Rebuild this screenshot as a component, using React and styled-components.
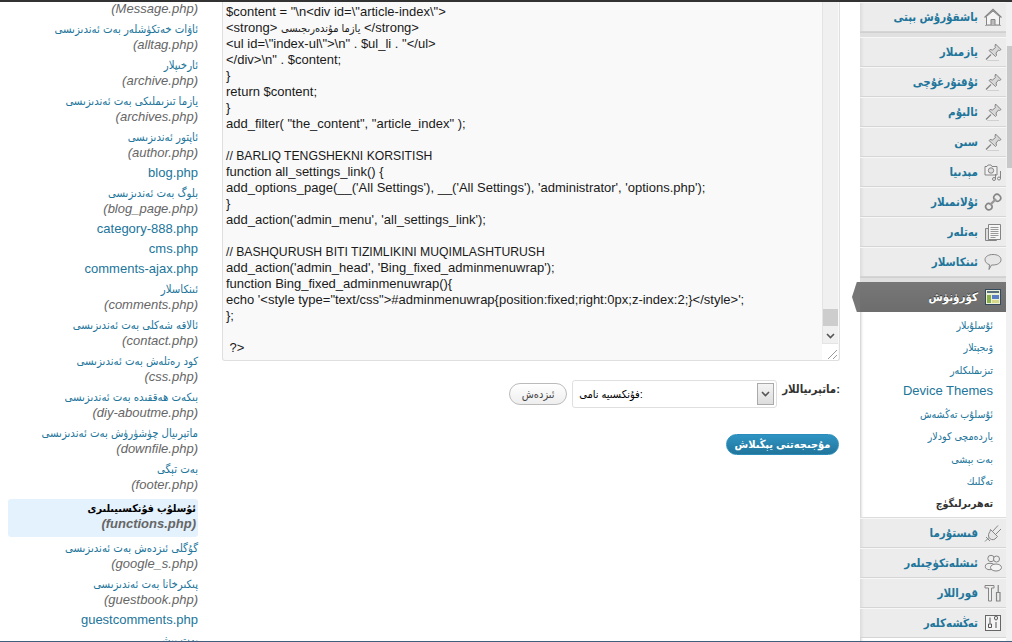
import React from 'react';
import styled, { createGlobalStyle } from 'styled-components';

const uiFont = '"Liberation Sans", "DejaVu Sans Condensed", "DejaVu Sans", sans-serif';

const Global = createGlobalStyle`
  html, body {
    margin: 0;
    padding: 0;
    height: 100%;
    overflow: hidden;
    background: #fff;
  }
  body {
    font-family: ${uiFont};
    font-size: 13px;
  }
`;

const Page = styled.div`
  width: 1012px;
  height: 642px;
  box-sizing: border-box;
  border-top: 2px solid #333;
  border-bottom: 1px solid #3f5f7c;
  display: flex;
  overflow: hidden;
`;

const FileList = styled.ul`
  width: 210px;
  flex: none;
  list-style: none;
  margin: 0;
  padding: 0 12px 0 8px;
  box-sizing: border-box;
  text-align: right;
  overflow: hidden;
`;

const FileItem = styled.li`
  margin-bottom: 4px;
  line-height: 16px;
  color: #21759b;
  ${p => p.$current && `
    background: #e4f2fd;
    border-radius: 3px;
    color: #000;
    font-weight: bold;
    margin: 6px 0 3px;
    padding: 1px 2px 5px 0;
  `}
`;

const FirstItem = styled.li`
  height: 16px;
  margin-top: -1px;
  margin-bottom: 4px;
`;

const Name = styled.div`
  font-size: ${p => (p.$latin ? '13px' : p.$bold ? '10.8px' : '11.3px')};
  white-space: nowrap;
`;

const FileName = styled.div`
  font-style: italic;
  color: #666;
  font-size: 13px;
`;

const Main = styled.main`
  width: 650px;
  flex: none;
  padding: 0 20px 0 12px;
  box-sizing: border-box;
`;

const Editor = styled.div`
  height: 359px;
  display: flex;
  background: #f9f9f9;
  border: 1px solid #dfdfdf;
  border-top: 0;
  border-radius: 0 0 3px 3px;
  box-sizing: border-box;
`;

const Code = styled.pre`
  flex: 1;
  min-width: 0;
  margin: 0;
  padding: 2px 3px;
  font-family: ${uiFont};
  font-size: 13px;
  line-height: 16px;
  color: #1a1a1a;
  overflow: hidden;
  direction: ltr;
`;

const CodeArabic = styled.span`
  font-size: 11px;
`;

const CodeCaps = styled.span`
  font-size: 12.2px;
`;

const Rail = styled.div`
  width: 15px;
  flex: none;
  margin-right: 1px;
  background: #f0f0f0;
  border-left: 1px solid #e4e4e4;
  display: flex;
  flex-direction: column;
  justify-content: flex-end;
`;

const Thumb = styled.div`
  height: 17px;
  background: #cdcdcd;
  margin-bottom: 2px;
`;

const RailArrow = styled.div`
  height: 15px;
  display: flex;
  align-items: center;
  justify-content: center;
`;

const Corner = styled.div`
  height: 17px;
  margin-left: -1px;
  background: #fff;
  border-top: 1px solid #e4e4e4;
  display: flex;
  align-items: flex-end;
  justify-content: flex-end;
  box-sizing: border-box;
`;

const Controls = styled.div`
  display: flex;
  justify-content: flex-end;
  gap: 5px;
  margin-top: 19px;
  align-items: flex-start;
`;

const SearchButton = styled.button`
  width: 58px;
  height: 22px;
  margin: 3px 0 0;
  padding: 0;
  border: 1px solid #bbb;
  border-radius: 11px;
  background: linear-gradient(#fff, #eee);
  color: #464646;
  font: 11px ${uiFont};
`;

const Select = styled.div`
  width: 205px;
  height: 28px;
  box-sizing: border-box;
  border: 1px solid #dfdfdf;
  border-radius: 3px;
  background: #fff;
  display: flex;
  align-items: center;
  justify-content: space-between;
  padding: 0 2px 0 6px;
  color: #000;
  font-size: 11px;
`;

const SelectArrow = styled.span`
  width: 17px;
  height: 22px;
  box-sizing: border-box;
  border: 1px solid #aaa;
  background: linear-gradient(#f4f4f4, #ddd);
  display: flex;
  align-items: center;
  justify-content: center;
`;

const FieldLabel = styled.label`
  font-weight: bold;
  color: #333;
  font-size: 11.4px;
  padding-top: 2px;
  white-space: nowrap;
`;

const PublishRow = styled.div`
  display: flex;
  justify-content: flex-end;
  margin-top: 26px;
  padding-right: 1px;
`;

const PublishButton = styled.button`
  width: 113px;
  height: 21px;
  padding: 0;
  border: 1px solid #298cba;
  border-radius: 11px;
  background: linear-gradient(#2f94c3, #21759b);
  color: #fff;
  white-space: nowrap;
  font: bold 11px ${uiFont};
`;

const Menu = styled.nav`
  width: 146px;
  flex: none;
  background: #fff;
  box-shadow: inset 3px 0 3px -2px #c4c4c4;
`;

const MenuRow = styled.a`
  height: 30px;
  box-sizing: border-box;
  display: flex;
  align-items: center;
  justify-content: flex-end;
  gap: 6px;
  padding-right: 4px;
  background: linear-gradient(90deg, #dcdcdc, #ececec 4px);
  border-top: 1px solid #f7f7f7;
  border-bottom: 1px solid #d5d5d5;
  color: #21759b;
  font-weight: bold;
  font-size: 11.5px;
`;

const ActiveRow = styled(MenuRow)`
  position: relative;
  background: linear-gradient(#777, #6d6d6d);
  border: 0;
  color: #fff;
  text-shadow: 0 -1px 0 #333;

  &::before {
    content: '';
    position: absolute;
    left: -8px;
    top: 0;
    width: 8px;
    height: 30px;
    background: #777;
    clip-path: polygon(100% 0, 100% 100%, 60% 100%, 0 50%, 60% 0);
  }
`;

const Separator = styled.div`
  height: 5px;
  background: #e0e0e0;
  border-top: 1px solid #d0d0d0;
  box-sizing: border-box;
`;

const SubMenu = styled.ul`
  list-style: none;
  margin: 0;
  padding: 2px 13px 5px 0;
  text-align: right;
  height: 206px;
  box-sizing: border-box;
  border-bottom: 1px solid #ddd;
`;

const SubItem = styled.li`
  height: 22.3px;
  line-height: ${p => (p.$latin ? '20px' : '22px')};
  color: ${p => (p.$current ? '#333' : '#21759b')};
  font-weight: ${p => (p.$current ? 'bold' : 'normal')};
  font-size: ${p => (p.$latin ? '13px' : '10.6px')};
`;

const Scrollbar = styled.div`
  flex: 1;
  background: #f1f1f1;
  padding-top: 44px;
`;

const ScrollThumb = styled.div`
  height: 122px;
  margin-left: 1px;
  background: #c8c8c8;
`;

const IconBox = styled.svg`
  width: 18px;
  height: 18px;
  flex: none;
  fill: none;
  stroke: #858585;
  stroke-width: 1;
`;

const Icon = ({ children }) => <IconBox viewBox="0 0 18 18">{children}</IconBox>;

const HomeIcon = () => (
  <Icon>
    <path d="M.5 9.500 9 1.500l8.500 8" strokeWidth="1.300" />
    <path d="M2.500 8.500V17h13V8.500L9 3z" fill="#f4f4f4" />
    <path d="M7 17v-5.500h4V17" fill="#bbb" />
    <path d="M1 17.500h16" stroke="#aaa" />
  </Icon>
);
const PinIcon = () => (
  <Icon>
    <path d="M11.500 1 17 6.500l-1.500 1-1-.5-2.500 3 .5 2.500-1 1L5 7.500l1-1 2.500.5 3-2.500-.5-1z" fill="#d8d8d8" />
    <path d="M7 11.500 2 16.500" strokeWidth="1.200" />
    <path d="M3 17.500h12" stroke="#d0d0d0" />
  </Icon>
);
const MediaIcon = () => (
  <Icon>
    <path d="M1 3.500h2l1-1.500h3l1 1.500h5v8.500H1z" fill="#f2f2f2" />
    <circle cx="7" cy="7.500" r="2.700" fill="#ddd" />
    <path d="M16.500 8v7.500M11.500 11v5" />
    <circle cx="15" cy="15.500" r="1.500" />
    <circle cx="10" cy="16" r="1.500" />
  </Icon>
);
const LinkIcon = () => (
  <Icon>
    <path d="M2.500 11.500a2.800 2.800 0 0 1 4-.5l1 1a2.800 2.800 0 0 1-.5 4l-.5.300a2.800 2.800 0 0 1-4-.5l-.5-.8a2.800 2.800 0 0 1 .5-3.500z" strokeWidth="1.700" />
    <path d="M11 2a2.800 2.800 0 0 1 4 0l1 1a2.800 2.800 0 0 1 0 4l-.5.500a2.800 2.800 0 0 1-4 0l-1-1a2.800 2.800 0 0 1 0-4z" strokeWidth="1.700" />
    <path d="M6 12l6-6" strokeWidth="2.400" stroke="#999" />
  </Icon>
);
const PagesIcon = () => (
  <Icon>
    <path d="M1.500 5.500h3v11h8v1h-11z" fill="#ddd" />
    <path d="M4.500 1.500h12v15h-12z" fill="#f6f6f6" />
    <path d="M6.500 4.500h8M6.500 6.500h8M6.500 8.500h8M6.500 10.500h8M6.500 12.500h8M6.500 14.500h5" stroke="#999" />
  </Icon>
);
const CommentIcon = () => (
  <Icon>
    <path d="M9 1.500c4.500 0 8 2 8 5.200s-3.500 5.300-8 5.300H7.500L5 16.500l.5-4.800C3 11 1 9 1 6.700 1 3.500 4.500 1.500 9 1.500z" fill="#e6e6e6" />
  </Icon>
);
const AppearanceIcon = () => (
  <svg width="16" height="16" viewBox="0 0 16 16" style={{ flex: 'none', margin: '0 1px' }}>
    <rect x=".5" y=".5" width="15" height="15" fill="#e9f1d8" stroke="#34495e" />
    <rect x="2" y="2" width="12" height="2" fill="#58707d" />
    <rect x="2" y="6" width="4" height="8" fill="#8bb04a" />
    <rect x="7" y="6" width="7" height="4" fill="#5b7fc4" />
    <rect x="7" y="11" width="7" height="3" fill="#d8d88a" />
  </svg>
);
const PluginIcon = () => (
  <Icon>
    <path d="M6.500 5.500l7 7-2.500 2.500c-2 1.500-5 .5-6-1.500-1-2-.5-4 1-6z" fill="#e6e6e6" />
    <path d="M8.500 7.500 14 1.500M11.500 10.500 17 5M5 13.500 1 17.500M2 13l4 4" />
  </Icon>
);
const UsersIcon = () => (
  <Icon>
    <circle cx="7" cy="4.500" r="3.200" fill="#eee" />
    <circle cx="12.500" cy="5" r="3" fill="#eee" />
    <ellipse cx="6" cy="12.500" rx="4.700" ry="3.200" fill="#eee" />
    <ellipse cx="12" cy="13.500" rx="5.500" ry="3.500" fill="#f4f4f4" />
  </Icon>
);
const ToolsIcon = () => (
  <Icon>
    <path d="M1 1.500h9v2.500H7.500v13H4.500V4H1z" fill="#eee" />
    <path d="M12.500 8.500h3.500v8.500h-3.500zM14.200 1v7.500" strokeWidth="1.200" />
  </Icon>
);
const SettingsIcon = () => (
  <Icon>
    <rect x="1.500" y="1.500" width="15" height="15" stroke="#666" fill="#f4f4f4" />
    <path d="M6 3.500v6M4.500 10h3v3.500h-3zM12 8v6M10.500 4a1.500 2 0 0 0 3 0 1.500 2 0 0 0-3 0z" stroke="#555" />
  </Icon>
);

const files = [
  ['ئاۋات خەتكۈشلەر بەت ئەندىزىسى', 'alltag.php'],
  ['ئارخىپلار', 'archive.php'],
  ['يازما تىزىملىكى بەت ئەندىزىسى', 'archives.php'],
  ['ئاپتور ئەندىزىسى', 'author.php'],
  ['blog.php'],
  ['بلوگ بەت ئەندىزىسى', 'blog_page.php'],
  ['category-888.php'],
  ['cms.php'],
  ['comments-ajax.php'],
  ['ئىنكاسلار', 'comments.php'],
  ['ئالاقە شەكلى بەت ئەندىزىسى', 'contact.php'],
  ['كود رەتلەش بەت ئەندىزىسى', 'css.php'],
  ['بىكەت ھەققىدە بەت ئەندىزىسى', 'diy-aboutme.php'],
  ['ماتېرىيال چۈشۈرۈش بەت ئەندىزىسى', 'downfile.php'],
  ['بەت تېگى', 'footer.php'],
  ['ئۇسلۇب فۇنكسىيىلىرى', 'functions.php', true],
  ['گۇگلى ئىزدەش بەت ئەندىزىسى', 'google_s.php'],
  ['پىكىرخانا بەت ئەندىزىسى', 'guestbook.php'],
  ['guestcomments.php'],
  ['بەت بېشى'],
];

const codeTop = `$content = "\\n<div id=\\"article-index\\">
<strong> `;

const codeStrongEnd = ` </strong>
<ul id=\\"index-ul\\">\\n" . $ul_li . "</ul>
</div>\\n" . $content;
}
return $content;
}
add_filter( "the_content", "article_index" );

`;

const codeSettings = `
function all_settings_link() {
add_options_page(__('All Settings'), __('All Settings'), 'administrator', 'options.php');
}
add_action('admin_menu', 'all_settings_link');

`;

const codeFixed = `
add_action('admin_head', 'Bing_fixed_adminmenuwrap');
function Bing_fixed_adminmenuwrap(){
echo '<style type="text/css">#adminmenuwrap{position:fixed;right:0px;z-index:2;}</style>';
};

 ?>`;

const topMenu = [
  ['يازمىلار', PinIcon],
  ['ئۇقتۇرغۇچى', PinIcon],
  ['ئالبۇم', PinIcon],
  ['سىن', PinIcon],
  ['مېدىيا', MediaIcon],
  ['ئۇلانمىلار', LinkIcon],
  ['بەتلەر', PagesIcon],
  ['ئىنكاسلار', CommentIcon],
];

const subMenu = [
  'ئۇسلۇبلار',
  'ۋىجېتلار',
  'تىزىملىكلەر',
  'Device Themes',
  'ئۇسلۇب تەڭشەش',
  'ياردەمچى كودلار',
  'بەت بېشى',
  'تەگلىك',
];

const bottomMenu = [
  ['قىستۇرما', PluginIcon],
  ['ئىشلەتكۈچىلەر', UsersIcon],
  ['قوراللار', ToolsIcon],
  ['تەڭشەكلەر', SettingsIcon],
];

const isLatin = text => /^[A-Za-z]/.test(text);

export default function App() {
  return (
    <>
      <Global />
      <Page>
        <FileList>
          <FirstItem>
            <FileName>(Message.php)</FileName>
          </FirstItem>
          {files.map(([name, file, current]) => (
            <FileItem key={name} $current={current}>
              <Name $latin={isLatin(name)} $bold={current}>{name}</Name>
              {file && <FileName>({file})</FileName>}
            </FileItem>
          ))}
        </FileList>

        <Main>
          <Editor>
            <Code>
              {codeTop}
              <CodeArabic>يازما مۇندەرىجىسى</CodeArabic>
              {codeStrongEnd}
              <CodeCaps>// BARLIQ TENGSHEKNI KORSITISH</CodeCaps>
              {codeSettings}
              <CodeCaps>// BASHQURUSH BITI TIZIMLIKINI MUQIMLASHTURUSH</CodeCaps>
              {codeFixed}
            </Code>
            <Rail>
              <Thumb />
              <RailArrow>
                <svg width="9" height="6" viewBox="0 0 9 6">
                  <path d="M1 1l3.500 3.500L8 1" fill="none" stroke="#555" strokeWidth="1.600" />
                </svg>
              </RailArrow>
              <Corner>
                <svg width="11" height="11" viewBox="0 0 11 11">
                  <path d="M1 10l9-9M6 10l4-4" stroke="#999" fill="none" />
                </svg>
              </Corner>
            </Rail>
          </Editor>

          <Controls>
            <SearchButton>ئىزدەش</SearchButton>
            <Select>
              <span>فۇنكسىيە نامى:</span>
              <SelectArrow>
                <svg width="9" height="6" viewBox="0 0 9 6">
                  <path d="M1 1l3.500 3.500L8 1" fill="none" stroke="#555" strokeWidth="1.600" />
                </svg>
              </SelectArrow>
            </Select>
            <FieldLabel>ماتېرىياللار:</FieldLabel>
          </Controls>

          <PublishRow>
            <PublishButton>مۇجىجەتنى يېڭىلاش</PublishButton>
          </PublishRow>
        </Main>

        <Menu>
          <MenuRow>
            باشقۇرۇش بېتى
            <HomeIcon />
          </MenuRow>
          <Separator />
          {topMenu.map(([label, Glyph]) => (
            <MenuRow key={label}>
              {label}
              <Glyph />
            </MenuRow>
          ))}
          <Separator />
          <ActiveRow>
            كۆرۈنۈش
            <AppearanceIcon />
          </ActiveRow>
          <SubMenu>
            {subMenu.map(label => (
              <SubItem key={label} $latin={isLatin(label)}>{label}</SubItem>
            ))}
            <SubItem $current>تەھرىرلىگۈچ</SubItem>
          </SubMenu>
          {bottomMenu.map(([label, Glyph]) => (
            <MenuRow key={label}>
              {label}
              <Glyph />
            </MenuRow>
          ))}
        </Menu>

        <Scrollbar>
          <ScrollThumb />
        </Scrollbar>
      </Page>
    </>
  );
}
